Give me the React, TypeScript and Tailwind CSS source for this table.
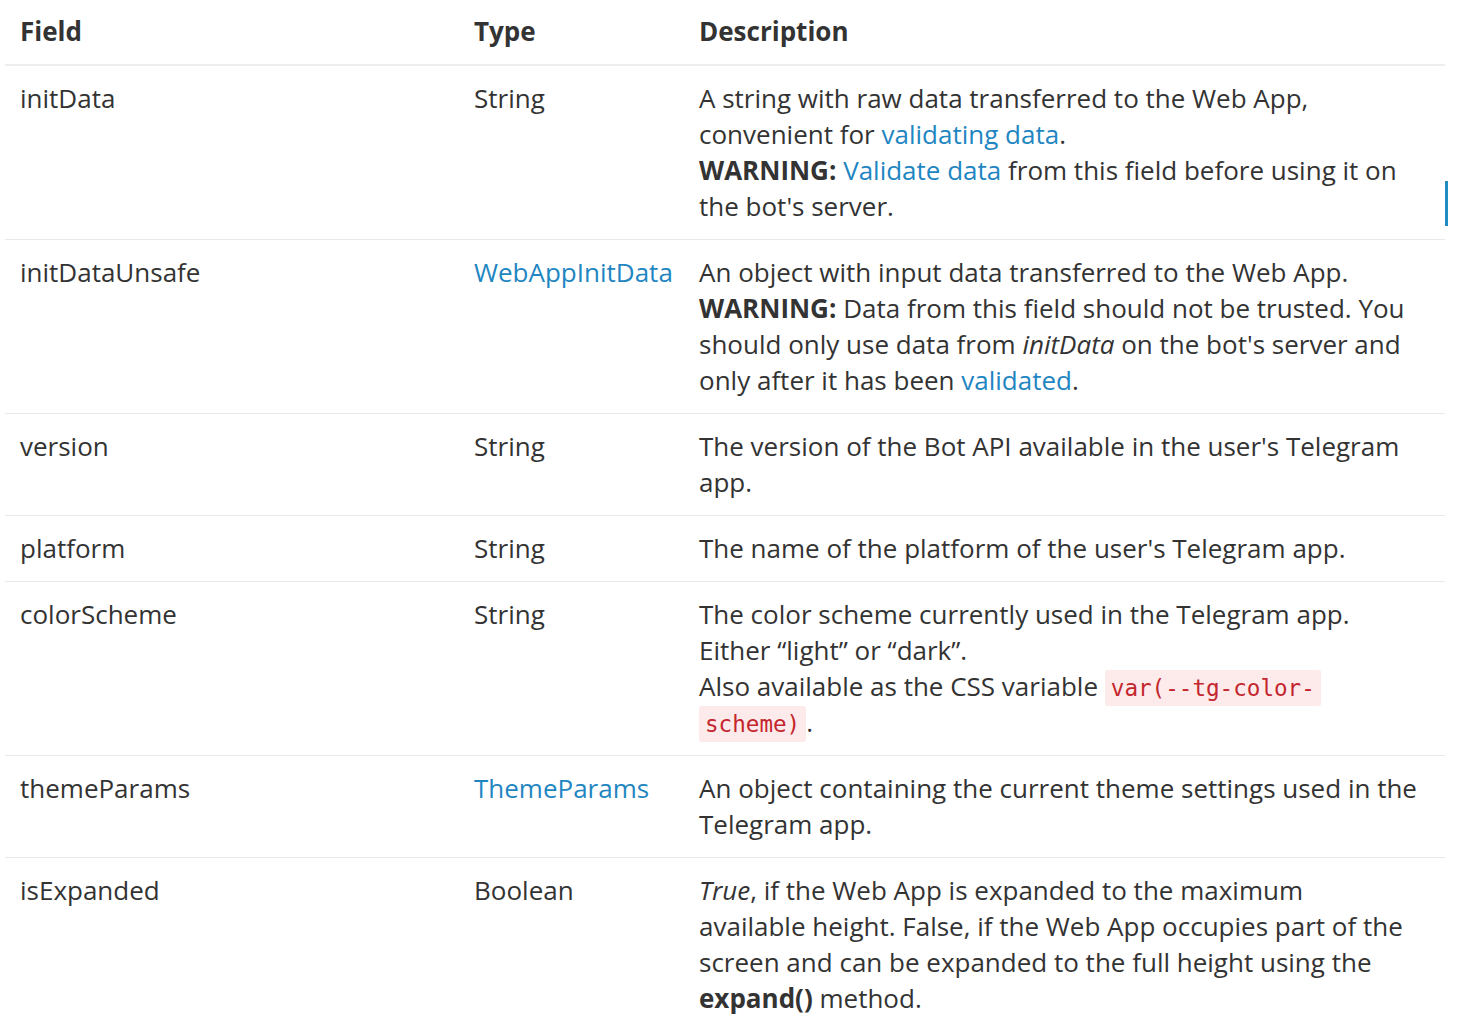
import React from "react";

const Link = (props: { children: React.ReactNode }) => <a className="text-[#1f86c2]">{props.children}</a>;

const Code = (props: { children: React.ReactNode }) => (
  <code className="rounded-[2px] bg-[#fcebea] px-[6px] py-[5px] font-['DejaVu_Sans_Mono',monospace] text-[22.6px] leading-[0px] text-[#c4262e] [box-decoration-break:clone]">
    {props.children}
  </code>
);

type Row = { field: string; type: React.ReactNode; desc: React.ReactNode };

const rows: Row[] = [
  {
    field: "initData",
    type: "String",
    desc: (
      <>
        A string with raw data transferred to the Web App,
        <br />
        convenient for <Link>validating data</Link>.
        <br />
        <b>WARNING:</b> <Link>Validate data</Link> from this field before using it on
        <br />
        the bot's server.
      </>
    ),
  },
  {
    field: "initDataUnsafe",
    type: <Link>WebAppInitData</Link>,
    desc: (
      <>
        An object with input data transferred to the Web App.
        <br />
        <b>WARNING:</b> Data from this field should not be trusted. You
        <br />
        should only use data from <i>initData</i> on the bot's server and
        <br />
        only after it has been <Link>validated</Link>.
      </>
    ),
  },
  {
    field: "version",
    type: "String",
    desc: (
      <>
        The version of the Bot API available in the user's Telegram
        <br />
        app.
      </>
    ),
  },
  {
    field: "platform",
    type: "String",
    desc: <>The name of the platform of the user's Telegram app.</>,
  },
  {
    field: "colorScheme",
    type: "String",
    desc: (
      <>
        The color scheme currently used in the Telegram app.
        <br />
        Either “light” or “dark”.
        <br />
        Also available as the CSS variable <Code>var(--tg-color-</Code>
        <br />
        <Code>scheme)</Code>.
      </>
    ),
  },
  {
    field: "themeParams",
    type: <Link>ThemeParams</Link>,
    desc: (
      <>
        An object containing the current theme settings used in the
        <br />
        Telegram app.
      </>
    ),
  },
  {
    field: "isExpanded",
    type: "Boolean",
    desc: (
      <>
        <i>True</i>, if the Web App is expanded to the maximum
        <br />
        available height. False, if the Web App occupies part of the
        <br />
        screen and can be expanded to the full height using the
        <br />
        <b>expand()</b> method.
      </>
    ),
  },
];

export default function App() {
  return (
    <div className="relative min-h-[1030px] bg-white pl-[5px] font-['Open_Sans',sans-serif] text-[26px] leading-[36px] text-[#333]">
      <div className="w-[1440px]">
        <div className="grid grid-cols-[454px_225px_761px] border-b-2 border-[#eeeeee] font-bold">
          <div className="px-[15px] pt-[13px] pb-[15px]">Field</div>
          <div className="px-[15px] pt-[13px] pb-[15px]">Type</div>
          <div className="px-[15px] pt-[13px] pb-[15px]">Description</div>
        </div>
        {rows.map((row, i) => (
          <div
            key={`row-${row.field}`}
            className={`grid grid-cols-[454px_225px_761px] ${i < rows.length - 1 ? "border-b border-[#eaeaea]" : ""}`}
          >
            <div className="px-[15px] pt-[14px] pb-[15px]">{row.field}</div>
            <div className="px-[15px] pt-[14px] pb-[15px]">{row.type}</div>
            <div className="px-[15px] pt-[14px] pb-[15px] whitespace-nowrap">{row.desc}</div>
          </div>
        ))}
      </div>
      <div className="absolute top-[181px] left-[1445px] h-[45px] w-[3px] bg-[#1f8cc3]" />
    </div>
  );
}
